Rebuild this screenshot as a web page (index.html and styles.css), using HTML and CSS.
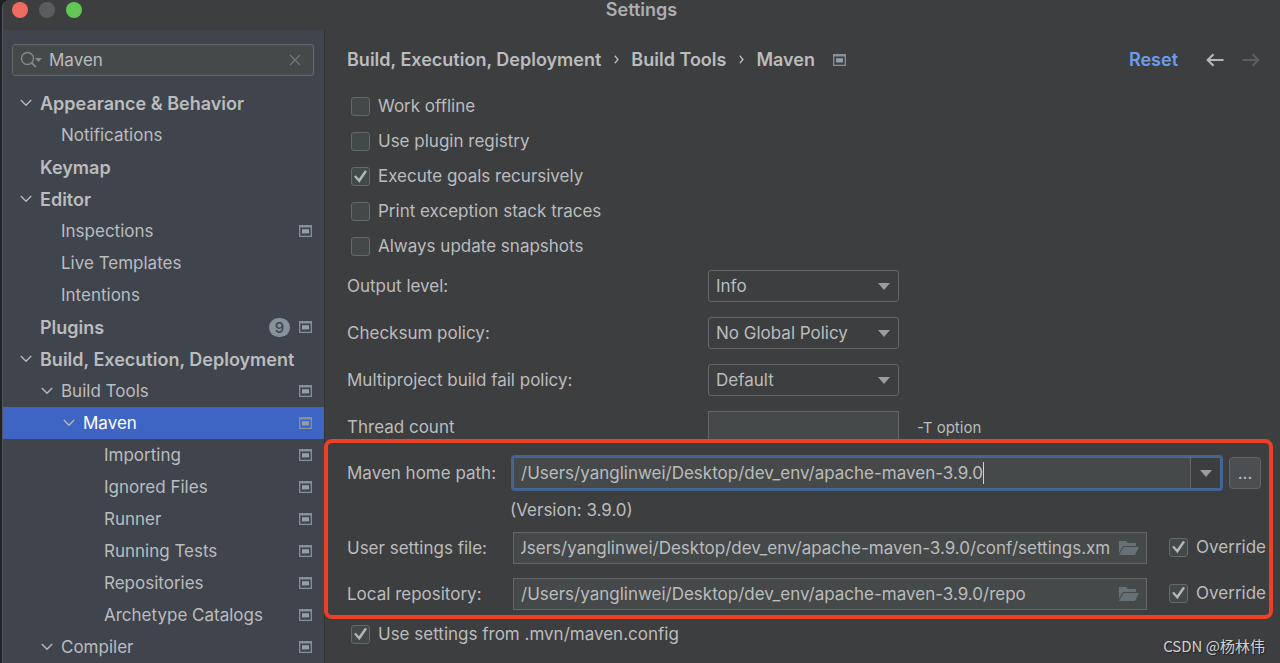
FILE: index.html
```html
<!DOCTYPE html>
<html lang="en">
<head>
<meta charset="utf-8">
<title>Settings</title>
<link rel="stylesheet" href="styles.css">
</head>
<body>
<svg class="defs" aria-hidden="true">
  <symbol id="project" viewBox="0 0 13 12"><path d="M.7 1h11.600v10.300H.7z" fill="none" stroke="#87919b" stroke-width="1.300"/><path d="M0 0h13v2.500H0z" fill="#87919b"/><path d="M3 4.200h7v4.300H3z" fill="#929da8"/></symbol>
  <symbol id="chevron" viewBox="0 0 12 8"><path d="M.8 1l5.2 5.3L11.200 1" fill="none" stroke="#b4b6b8" stroke-width="1.5"/></symbol>
  <symbol id="triangle" viewBox="0 0 12 7"><path d="M0 0h12L6 7z" fill="#9a9c9e"/></symbol>
  <symbol id="folder" viewBox="0 0 20 16"><path d="M0 1h7l2 2h8v3H4L0 13z" fill="#667075"/><path d="M4.500 7H20l-4 8H0z" fill="#667075"/></symbol>
</svg>
<div class="window">
  <header class="titlebar">
    <div class="lights">
      <button class="light red" aria-label="Close"></button>
      <button class="light gray" aria-label="Minimize"></button>
      <button class="light green" aria-label="Zoom"></button>
    </div>
    <h1 class="title">Settings</h1>
  </header>
  <div class="body">
    <aside class="sidebar">
      <div class="search">
        <svg class="search-icon" viewBox="0 0 22 18" aria-hidden="true"><circle cx="7.500" cy="7.500" r="6" fill="none" stroke="#858a90" stroke-width="1.400"/><path d="M11.800 11.800l4 4.200" stroke="#858a90" stroke-width="1.800"/><path d="M15 7h7l-3.500 4z" fill="#858a90"/></svg>
        <input class="search-input" type="text" value="Maven" aria-label="Search settings">
        <button class="clear" aria-label="Clear"><svg width="12" height="12" viewBox="0 0 12 12"><path d="M1 1l10 10M11 1L1 11" stroke="#747779" stroke-width="1.300"/></svg></button>
      </div>
      <ul class="tree">
        <li class="node l0 bold"><svg class="chev"><use href="#chevron"/></svg><span class="name">Appearance &amp; Behavior</span></li>
        <li class="node l1"><span class="chev"></span><span class="name">Notifications</span></li>
        <li class="node l0 bold"><span class="chev"></span><span class="name">Keymap</span></li>
        <li class="node l0 bold"><svg class="chev"><use href="#chevron"/></svg><span class="name">Editor</span></li>
        <li class="node l1"><span class="chev"></span><span class="name">Inspections</span><svg class="proj"><use href="#project"/></svg></li>
        <li class="node l1"><span class="chev"></span><span class="name">Live Templates</span></li>
        <li class="node l1"><span class="chev"></span><span class="name">Intentions</span></li>
        <li class="node l0 bold"><span class="chev"></span><span class="name">Plugins</span><span class="badge">9</span><svg class="proj"><use href="#project"/></svg></li>
        <li class="node l0 bold"><svg class="chev"><use href="#chevron"/></svg><span class="name">Build, Execution, Deployment</span></li>
        <li class="node l1"><svg class="chev"><use href="#chevron"/></svg><span class="name">Build Tools</span><svg class="proj"><use href="#project"/></svg></li>
        <li class="node l2 selected"><svg class="chev"><use href="#chevron"/></svg><span class="name">Maven</span><svg class="proj"><use href="#project"/></svg></li>
        <li class="node l3"><span class="chev"></span><span class="name">Importing</span><svg class="proj"><use href="#project"/></svg></li>
        <li class="node l3"><span class="chev"></span><span class="name">Ignored Files</span><svg class="proj"><use href="#project"/></svg></li>
        <li class="node l3"><span class="chev"></span><span class="name">Runner</span><svg class="proj"><use href="#project"/></svg></li>
        <li class="node l3"><span class="chev"></span><span class="name">Running Tests</span><svg class="proj"><use href="#project"/></svg></li>
        <li class="node l3"><span class="chev"></span><span class="name">Repositories</span><svg class="proj"><use href="#project"/></svg></li>
        <li class="node l3"><span class="chev"></span><span class="name">Archetype Catalogs</span><svg class="proj"><use href="#project"/></svg></li>
        <li class="node l1"><svg class="chev"><use href="#chevron"/></svg><span class="name">Compiler</span><svg class="proj"><use href="#project"/></svg></li>
      </ul>
    </aside>
    <main class="main">
      <div class="crumbs">
        <span>Build, Execution, Deployment</span>
        <svg class="sep" viewBox="0 0 5 9"><path d="M.8.8L4 4.500.8 8.200" fill="none" stroke="#bbb" stroke-width="1.300"/></svg>
        <span>Build Tools</span>
        <svg class="sep" viewBox="0 0 5 9"><path d="M.8.8L4 4.500.8 8.200" fill="none" stroke="#bbb" stroke-width="1.300"/></svg>
        <span>Maven</span>
        <svg class="proj crumb-proj"><use href="#project"/></svg>
        <button class="reset">Reset</button>
        <button class="nav" aria-label="Back"><svg width="18" height="14" viewBox="0 0 18 14"><path d="M17.500 7H2M7.500 1.200L1.700 7l5.800 5.800" fill="none" stroke="#b4b6b8" stroke-width="2.200"/></svg></button>
        <button class="nav" aria-label="Forward" disabled><svg width="18" height="14" viewBox="0 0 18 14"><path d="M.5 7H16M10.500 1.200L16.300 7l-5.800 5.800" fill="none" stroke="#5b5d5f" stroke-width="2.200"/></svg></button>
      </div>
      <div class="checks">
        <label class="check"><input type="checkbox">Work offline</label>
        <label class="check"><input type="checkbox">Use plugin registry</label>
        <label class="check"><input type="checkbox" checked>Execute goals recursively</label>
        <label class="check"><input type="checkbox">Print exception stack traces</label>
        <label class="check"><input type="checkbox">Always update snapshots</label>
      </div>
      <div class="options">
        <label for="output">Output level:</label>
        <div class="select"><select id="output"><option>Info</option></select><svg class="tri"><use href="#triangle"/></svg></div>
        <label for="checksum">Checksum policy:</label>
        <div class="select"><select id="checksum"><option>No Global Policy</option></select><svg class="tri"><use href="#triangle"/></svg></div>
        <label for="fail">Multiproject build fail policy:</label>
        <div class="select"><select id="fail"><option>Default</option></select><svg class="tri"><use href="#triangle"/></svg></div>
        <label for="threads">Thread count</label>
        <div class="threads"><input class="field" id="threads" type="text"><span class="hint">-T option</span></div>
      </div>
      <section class="paths">
        <div class="row home">
          <label class="row-label" for="home">Maven home path:</label>
          <div class="combo">
            <input class="combo-input" id="home" type="text" value="/Users/yanglinwei/Desktop/dev_env/apache-maven-3.9.0"><span class="caret"></span>
            <button class="combo-button" aria-label="Show paths"><svg class="tri"><use href="#triangle"/></svg></button>
          </div>
          <button class="browse">...</button>
        </div>
        <p class="version">(Version: 3.9.0)</p>
        <div class="row">
          <label class="row-label" for="settings">User settings file:</label>
          <div class="field file"><input class="file-input" id="settings" type="text" value="/Users/yanglinwei/Desktop/dev_env/apache-maven-3.9.0/conf/settings.xm"><svg class="folder"><use href="#folder"/></svg></div>
          <label class="check override"><input type="checkbox" checked>Override</label>
        </div>
        <div class="row">
          <label class="row-label" for="repo">Local repository:</label>
          <div class="field file"><input class="file-input" id="repo" type="text" value="/Users/yanglinwei/Desktop/dev_env/apache-maven-3.9.0/repo"><svg class="folder"><use href="#folder"/></svg></div>
          <label class="check override"><input type="checkbox" checked>Override</label>
        </div>
      </section>
      <label class="check mvn"><input type="checkbox" checked>Use settings from .mvn/maven.config</label>
    </main>
  </div>
  <div class="watermark">CSDN @杨林伟</div>
</div>
<script src="script.js"></script>
</body>
</html>
```
FILE: styles.css
```css
* { box-sizing: border-box; }
body {
  margin: 0;
  background: #1d2129;
  color: #bbbcbd;
  font: 17px/21px Inter, "Noto Sans CJK SC", sans-serif;
}
button, input, select { font: inherit; color: inherit; margin: 0; padding: 0; border: 0; background: none; }
input { outline: 0; min-width: 0; }
svg { display: block; flex: none; }
.defs { position: absolute; width: 0; height: 0; }
.window {
  position: relative;
  height: 100vh;
  margin-left: 2px;
  display: flex;
  flex-direction: column;
  overflow: hidden;
  background: #3d3e40;
  border-left: 1px solid #56585b;
  border-top-left-radius: 8px;
}
.titlebar { display: grid; grid-template-columns: 1fr auto 1fr; height: 30px; flex: none; }
.lights { display: flex; gap: 11px; padding: 2px 0 0 9px; }
.light { width: 16px; height: 16px; border-radius: 50%; }
.red { background: #ed6b5f; }
.gray { background: #5a5b5d; }
.green { background: #62c655; }
.title { margin: 0; font-size: 18px; line-height: 20px; font-weight: 600; color: #adaeaf; }
.body { display: flex; flex: 1; min-height: 0; }
.sidebar { flex: 0 0 322px; padding-top: 14px; background: #40444d; border-right: 1px solid #323336; overflow: hidden; }
.search {
  display: flex;
  align-items: center;
  height: 32px;
  margin: 0 10px 11px 9px;
  padding: 0 12px 0 7px;
  background: #45494a;
  border: 1px solid #646667;
  border-radius: 3px;
}
.search-icon { width: 22px; height: 18px; }
.search-input { flex: 1; margin-left: 7px; }
.tree { list-style: none; margin: 0; padding: 0; }
.node { display: flex; align-items: center; height: 32px; padding-right: 12px; }
.bold { font-size: 18px; font-weight: 600; }
.l0 { padding-left: 17px; }
.l1 { padding-left: 38px; }
.l2 { padding-left: 60px; }
.l3 { padding-left: 81px; }
.chev { width: 12px; height: 8px; margin-right: 8px; flex: none; }
.name { flex: 1; white-space: nowrap; }
.proj { width: 13px; height: 12px; }
.badge { width: 21px; height: 19px; margin-right: 9px; border-radius: 10px; background: #87919b; color: #40444d; font-size: 15px; font-weight: 500; line-height: 19px; text-align: center; }
.selected { background: #3e65c4; color: #fff; }
.main { flex: 1; min-width: 0; }
.crumbs { display: flex; align-items: center; height: 59px; padding: 0 20px 0 22px; font-size: 18px; font-weight: 600; white-space: nowrap; }
.sep { width: 5px; height: 9px; margin: 0 12px 0 13px; }
.crumb-proj { margin: 0 auto 0 18px; }
.reset { color: #6d9ced; margin-right: 19px; }
.nav { margin-left: 9px; }
.nav + .nav { margin-left: 18px; }
.checks { display: flex; flex-direction: column; padding-left: 26px; }
.check { display: flex; align-items: center; gap: 8px; height: 35px; white-space: nowrap; }
.check input { appearance: none; width: 19px; height: 19px; border: 1px solid #66696a; border-radius: 3px; background: #434949; display: grid; place-items: center; flex: none; }
.check input:checked::before { content: ""; width: 13px; height: 13px; background: #b4b6b7; clip-path: polygon(0 50%, 14% 40%, 38% 68%, 84% 2%, 100% 12%, 41% 98%); }
.options { display: grid; grid-template-columns: 361px 1fr; gap: 15px 0; align-items: center; padding: 6px 22px 0; }
.select { display: grid; width: 191px; align-items: center; }
.select select { grid-area: 1 / 1; appearance: none; height: 32px; padding: 0 30px 0 7px; border: 1px solid #646667; border-radius: 3px; }
.tri { width: 12px; height: 7px; pointer-events: none; }
.select .tri { grid-area: 1 / 1; justify-self: end; margin-right: 9px; }
.threads { display: flex; align-items: center; gap: 18px; }
.field { height: 32px; background: #45494a; border: 1px solid #646667; }
.threads .field { width: 191px; }
.hint { font-size: 15px; }
.paths { position: relative; margin: -4px 7px 0 -1px; padding: 14px 0 5px 19px; border: 4px solid #ee4026; border-radius: 8px; }
.row { display: flex; align-items: center; padding-right: 3px; }
.row + .row { margin-top: 14px; }
.home { padding-right: 8px; }
.row-label { flex: 0 0 166px; white-space: nowrap; }
.combo { display: flex; align-items: center; flex: 1; min-width: 0; height: 32px; padding-left: 8px; background: #45494a; border-radius: 2px; box-shadow: 0 0 0 1px #46689a inset, 0 0 0 2px #456391; }
.combo-input { field-sizing: content; }
.caret { width: 1px; height: 22px; margin-right: auto; background: #d0d0d0; }
.combo-button { display: grid; place-items: center; width: 30px; height: 30px; margin-right: 1px; border-left: 1px solid #646667; background: #3d3e40; }
.browse { width: 32px; height: 32px; margin-left: 8px; border: 1px solid #616365; border-radius: 4px; background: #4b4f52; }
.version { display: flex; align-items: center; height: 43px; margin: 0; padding-left: 163px; }
.file { display: flex; align-items: center; flex: 1; min-width: 0; padding: 0 7px; }
.file-input { flex: 1; }
.folder { width: 20px; height: 16px; margin-left: 9px; }
.override { margin: 0 0 2px 22px; height: 30px; }
.mvn { height: 30px; padding-left: 26px; }
.watermark { position: absolute; right: 15px; bottom: 7px; color: #cfd0d1; font: 15px/20px "Noto Sans CJK SC", sans-serif; text-shadow: 1px 1px 1px #222; }
```
FILE: script.js
```js
const settingsFile = document.getElementById("settings");
settingsFile.scrollLeft = settingsFile.scrollWidth;
```
